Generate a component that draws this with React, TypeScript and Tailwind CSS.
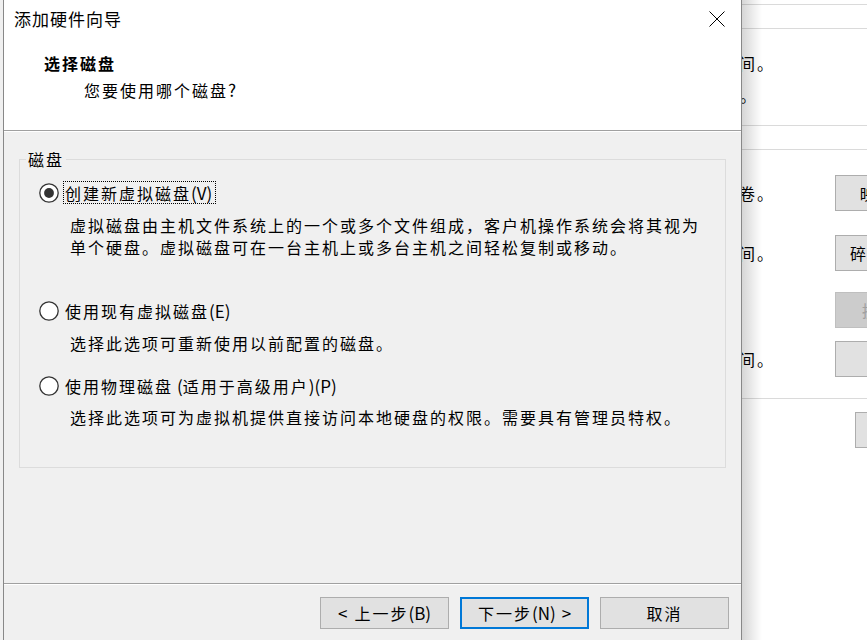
import React from "react";

function Radio({ checked }: { checked?: boolean }) {
  return (
    <svg width="20" height="20" viewBox="0 0 20 20" className="shrink-0">
      <circle cx="10" cy="10" r="9.2" fill="white" stroke="#333333" strokeWidth="1.3" />
      {checked && <circle cx="10" cy="10" r="4.9" fill="#333333" />}
    </svg>
  );
}

function L({ children, className = "" }: { children: React.ReactNode; className?: string }) {
  return <span className={"tracking-normal text-[17px] " + className}>{children}</span>;
}

function RadioRow({
  checked,
  focused,
  children,
}: {
  checked?: boolean;
  focused?: boolean;
  children: React.ReactNode;
}) {
  return (
    <div className="h-[23px] flex items-center pl-[19px]">
      <Radio checked={checked} />
      <div
        className={
          "ml-[4px] h-[23px] flex items-center pl-[1px] pr-[3px] border whitespace-nowrap " +
          (focused ? "border-dotted border-black" : "border-transparent")
        }
      >
        <span>{children}</span>
      </div>
    </div>
  );
}

function WinButton({
  children,
  primary,
}: {
  children: React.ReactNode;
  primary?: boolean;
}) {
  return (
    <div
      className={
        "w-[129px] h-[32px] flex items-center justify-center bg-[#e1e1e1] whitespace-nowrap " +
        (primary ? "border-2 border-[#0078d7]" : "border border-[#adadad]")
      }
    >
      <span>{children}</span>
    </div>
  );
}

function BgButton({
  children,
  disabled,
  className = "",
}: {
  children?: React.ReactNode;
  disabled?: boolean;
  className?: string;
}) {
  return (
    <div
      className={
        "w-[125px] h-[36px] shrink-0 flex items-center justify-center border whitespace-nowrap " +
        (disabled
          ? "bg-[#cccccc] border-[#bfbfbf] text-[#a0a0a0]"
          : "bg-[#e1e1e1] border-[#adadad] text-black") +
        " " +
        className
      }
    >
      <span>{children}</span>
    </div>
  );
}

export default function App() {
  return (
    <div className="w-[867px] h-[640px] flex overflow-hidden bg-white text-black font-['Noto_Sans_CJK_SC','Noto_Sans',sans-serif] text-[16px] leading-[22px] tracking-[2px]">
      {/* left sliver of background */}
      <div className="w-[3px] shrink-0 bg-[#f0f0f0]" />

      {/* dialog */}
      <div className="w-[739px] shrink-0 flex flex-col border-x border-[#888888] bg-[#f0f0f0]">
        {/* header */}
        <div className="h-[130px] bg-white flex flex-col">
          <div className="h-[37px] flex items-center justify-between pl-[10px] pr-[16px]">
            <span className="text-[17px] tracking-[1px]">添加硬件向导</span>
            <svg width="16" height="16" viewBox="0 0 16 16">
              <path d="M0.5 0.5 L15.5 15.5 M15.5 0.5 L0.5 15.5" stroke="#000" strokeWidth="1" />
            </svg>
          </div>
          <div className="mt-[15px] pl-[40px] font-bold">选择磁盘</div>
          <div className="mt-[5px] pl-[80px]">
            您要使用哪个磁盘<L>?</L>
          </div>
        </div>
        <div className="h-px bg-[#a0a0a0]" />
        <div className="h-px bg-white" />

        {/* body */}
        <div className="h-[451px] flex flex-col">
          <div className="mt-[27px] mx-[15px] h-[309px] border border-[#dcdcdc] relative pt-[21px]">
            <span className="absolute -top-[12px] left-[6px] px-[2px] bg-[#f0f0f0]">磁盘</span>

            <RadioRow checked focused>
              创建新虚拟磁盘<L>(V)</L>
            </RadioRow>
            <div className="mt-[10px] pl-[50px]">
              虚拟磁盘由主机文件系统上的一个或多个文件组成，客户机操作系统会将其视为
              <br />
              单个硬盘。虚拟磁盘可在一台主机上或多台主机之间轻松复制或移动。
            </div>

            <div className="mt-[41px]">
              <RadioRow>
                使用现有虚拟磁盘<L>(E)</L>
              </RadioRow>
            </div>
            <div className="mt-[10px] pl-[50px]">选择此选项可重新使用以前配置的磁盘。</div>

            <div className="mt-[20px]">
              <RadioRow>
                使用物理磁盘<L className="pl-[4px]">(</L>适用于高级用户<L>)(P)</L>
              </RadioRow>
            </div>
            <div className="mt-[9px] pl-[50px]">
              选择此选项可为虚拟机提供直接访问本地硬盘的权限。需要具有管理员特权。
            </div>
          </div>
        </div>

        <div className="h-px bg-[#a0a0a0]" />
        <div className="h-px bg-white" />

        <div className="mt-[12px] flex justify-end gap-[11px] pr-[12px]">
          <WinButton>
            <L className="pr-[7px]">&lt;</L>上一步<L>(B)</L>
          </WinButton>
          <WinButton primary>
            下一步<L>(N)</L>
            <L className="pl-[6px]">&gt;</L>
          </WinButton>
          <WinButton>取消</WinButton>
        </div>
      </div>

      {/* background window */}
      <div className="relative flex-1 overflow-hidden bg-white flex flex-col">
        <div className="h-[4px] shrink-0" />
        <div className="h-px bg-[#dadada] shrink-0" />
        <div className="h-[23px] shrink-0" />
        <div className="h-px bg-[#dadada] shrink-0" />
        <div className="h-[96px] shrink-0 flex flex-col pt-[23px]">
          <div className="-ml-[3px] whitespace-nowrap">间。</div>
          <div className="mt-[10px] -ml-[2px] whitespace-nowrap">。</div>
        </div>
        <div className="h-px bg-[#dadada] shrink-0" />
        <div className="h-[23px] shrink-0" />
        <div className="h-px bg-[#dadada] shrink-0" />
        <div className="h-[248px] shrink-0 flex flex-col pt-[25px]">
          <div className="h-[36px] flex items-center">
            <div className="w-[93px] shrink-0 -ml-[3px] whitespace-nowrap">卷。</div>
            <BgButton className="ml-[3px]">
              映射<L>(M)...</L>
            </BgButton>
          </div>
          <div className="mt-[24px] h-[36px] flex items-center">
            <div className="w-[93px] shrink-0 -ml-[3px] whitespace-nowrap">间。</div>
            <BgButton className="ml-[3px]">
              碎片整理<L>(D)</L>
            </BgButton>
          </div>
          <div className="mt-[21px] h-[36px] flex items-center">
            <div className="w-[93px] shrink-0" />
            <BgButton disabled>
              扩展<L>(E)...</L>
            </BgButton>
          </div>
          <div className="mt-[13px] h-[36px] flex items-center">
            <div className="w-[93px] shrink-0 -ml-[3px] whitespace-nowrap">间。</div>
            <BgButton className="ml-[3px]">
              压缩<L>(C)</L>
            </BgButton>
          </div>
        </div>
        <div className="h-px bg-[#dadada] shrink-0" />
        <div className="pt-[13px] pl-[113px]">
          <BgButton>
            高级<L>(V)...</L>
          </BgButton>
        </div>

        {/* window shadow */}
        <div className="absolute inset-y-0 left-0 w-[20px] bg-linear-to-r from-[rgba(0,0,0,0.16)] to-transparent" />
      </div>
    </div>
  );
}
